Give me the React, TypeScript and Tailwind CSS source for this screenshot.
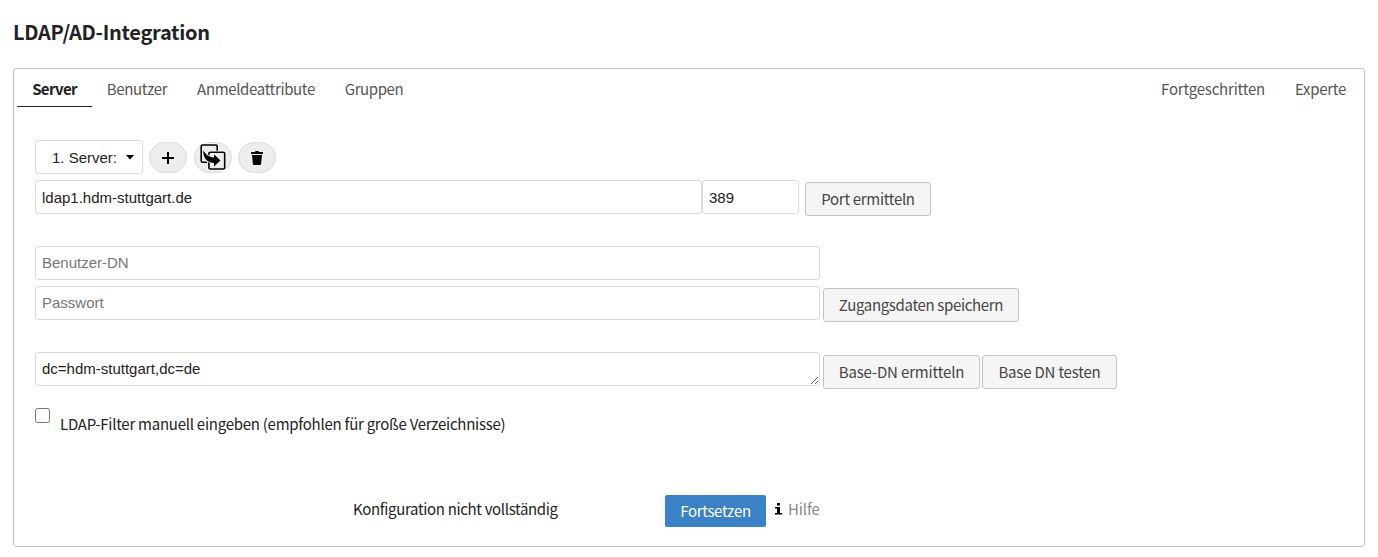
import type { ReactNode } from "react";

const field =
  "h-[34px] rounded-[3px] border border-[#dbdbdb] bg-white px-[6px] font-['Liberation_Sans',sans-serif] text-[15px] tracking-normal text-[#222] outline-none placeholder:text-[#767676] placeholder:opacity-100";

function Button({ children, className }: { children: ReactNode; className: string }) {
  return (
    <button
      className={`flex h-[34px] shrink-0 items-center justify-center rounded-[3px] border border-[#c3c3c3] bg-[#f5f5f5] text-[15px] whitespace-nowrap text-[#454545] ${className}`}
    >
      {children}
    </button>
  );
}

function Round({ children, className }: { children: ReactNode; className: string }) {
  return (
    <button
      className={`flex h-[31px] w-[38px] shrink-0 items-center justify-center rounded-full border border-[#dbdbdb] bg-[#ededed] text-black ${className}`}
    >
      {children}
    </button>
  );
}

export default function App() {
  return (
    <main className="h-[557px] overflow-hidden bg-white px-[13px] pt-[18px] font-['Noto_Sans_CJK_JP',sans-serif] text-[15px] text-[#222]">
      <h2 className="h-[50px] text-[20px] leading-[28px] font-bold tracking-[-0.27px]">LDAP/AD-Integration</h2>
      <section className="h-[479px] w-[1352px] rounded-[3px] border border-[#c3c3c3]">
        <nav className="flex h-[38px] px-[3px] leading-[39px] text-[#555]">
          <a className="w-[75px] border-b border-[#222] text-center font-bold tracking-[-0.65px] text-[#222]">Server</a>
          <a className="w-[90px] text-center tracking-[-0.35px]">Benutzer</a>
          <a className="w-[148px] text-center tracking-[-0.35px]">Anmeldeattribute</a>
          <a className="w-[88px] text-center tracking-[-0.4px]">Gruppen</a>
          <a className="ml-auto w-[134px] text-center tracking-[-0.2px]">Fortgeschritten</a>
          <a className="w-[81px] text-center tracking-[-0.3px]">Experte</a>
        </nav>
        <div className="mt-[33px] flex h-[34px] pl-[21px]">
          <button className="flex h-[34px] w-[108px] items-center rounded-[3px] border border-[#dbdbdb] pl-[16px] font-['Liberation_Sans',sans-serif] text-[15px]">
            <span className="pt-[2px]">1. Server:</span>
            <svg className="ml-[9px]" width="8" height="5" viewBox="0 0 8 5">
              <path d="M0 0h8L4 4.5z" fill="#000" />
            </svg>
          </button>
          <Round className="mt-[2px] ml-[6px]">
            <svg width="16" height="16" viewBox="0 0 16 16">
              <path d="M7 2h2v5h5v2H9v5H7V9H2V7h5z" />
            </svg>
          </Round>
          <Round className="mt-[2px] ml-[7px]">
            <svg className="mb-px shrink-0" width="28" height="28" viewBox="0 0 28 28">
              <rect x="1" y="0.5" width="18.5" height="20" rx="1.5" fill="#fff" />
              <rect x="2.2" y="2" width="16" height="17.2" rx="1.2" fill="#ededed" stroke="#000" strokeWidth="1.6" />
              <rect x="8.2" y="7.7" width="19" height="20" rx="1.5" fill="#fff" />
              <rect x="9.9" y="9.2" width="15.8" height="16.8" rx="1.2" fill="#ededed" stroke="#000" strokeWidth="1.6" />
              <path
                d="M4.2 7.4C6.8 11 9.5 14 15 14.6v-3.4l6.5 6.3-6.5 6v-3.6C8.5 19.5 4 15.5 4.2 7.4z"
                fill="#000"
                stroke="#fff"
                strokeWidth="1.2"
                paintOrder="stroke"
              />
            </svg>
          </Round>
          <Round className="mt-[2px] ml-[6px]">
            <svg width="16" height="16" viewBox="0 0 16 16">
              <path d="M6.5 1 6 2H3C2.4 2 2 2.4 2 3v1h12V3c0-.6-.4-1-1-1h-3l-.5-1zM3 5l.9 9c.1.6.5 1 1.1 1h6c.6 0 1-.4 1.1-1L13 5z" />
            </svg>
          </Round>
        </div>
        <div className="mt-[6px] flex pl-[21px]">
          <input className={`${field} w-[667px]`} defaultValue="ldap1.hdm-stuttgart.de" />
          <input className={`${field} w-[97px]`} defaultValue="389" />
          <Button className="mt-[2px] ml-[6px] w-[126px] tracking-[-0.3px]">Port ermitteln</Button>
        </div>
        <div className="mt-[30px] flex pl-[21px]">
          <input className={`${field} w-[785px] pb-[2px]`} placeholder="Benutzer-DN" />
        </div>
        <div className="mt-[6px] flex pl-[21px]">
          <input className={`${field} w-[785px] pb-[2px]`} type="password" placeholder="Passwort" />
          <Button className="mt-[2px] ml-[3px] w-[196px] pt-px tracking-[-0.33px]">Zugangsdaten speichern</Button>
        </div>
        <div className="mt-[30px] flex pl-[21px]">
          <textarea
            className={`${field} w-[785px] resize overflow-hidden pt-[7px] leading-[18px]`}
            defaultValue="dc=hdm-stuttgart,dc=de"
          />
          <Button className="mt-[3px] ml-[3px] w-[157px] pt-px tracking-[-0.15px]">Base-DN ermitteln</Button>
          <Button className="mt-[3px] ml-[2px] w-[135px] pt-px tracking-[-0.2px]">Base DN testen</Button>
        </div>
        <label className="mt-[18px] flex pl-[21px]">
          <input type="checkbox" className="mt-px h-[15px] w-[15px]" />
          <span className="mt-[6px] ml-[10px] leading-[22px] tracking-[-0.255px]">
            LDAP-Filter manuell eingeben (empfohlen für große Verzeichnisse)
          </span>
        </label>
        <div className="mt-[60px] flex pl-[339px]">
          <span className="mt-[3px] w-[312px] leading-[22px] tracking-[-0.34px]">Konfiguration nicht vollständig</span>
          <button className="flex h-[32px] w-[101px] items-center justify-center rounded-[2px] bg-[#3a81c6] tracking-[-0.3px] text-white">
            Fortsetzen
          </button>
          <svg className="mt-[8px] ml-[8px]" width="9" height="12" viewBox="0 0 9 12">
            <path d="M3 0h3v2.5H3zM1 4h5v6h2v1.5H1V10h2V5.5H1z" />
          </svg>
          <a className="mt-[3px] ml-[5px] leading-[22px] tracking-[-0.1px] text-[#888]">Hilfe</a>
        </div>
      </section>
    </main>
  );
}
